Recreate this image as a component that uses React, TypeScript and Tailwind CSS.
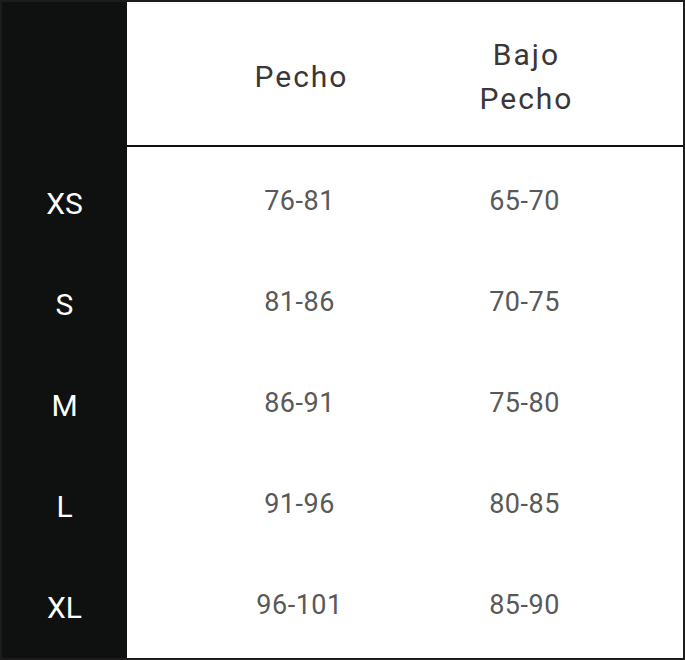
import React from "react";

const rows = [
  { size: "XS", chest: "76-81", under: "65-70" },
  { size: "S", chest: "81-86", under: "70-75" },
  { size: "M", chest: "86-91", under: "75-80" },
  { size: "L", chest: "91-96", under: "80-85" },
  { size: "XL", chest: "96-101", under: "85-90" },
];

const App = () => {
  return (
    <div className="h-[660px] w-[685px] bg-white font-['Roboto',sans-serif]">
      <div className="flex h-full w-full border-2 border-[#1c1c1c]">
        <div className="w-[125px] shrink-0 bg-[#0f1110]">
          <div className="h-[145px]" />
          <div className="flex flex-col pt-[6px]">
            {rows.map((r) => (
              <div
                key={r.size}
                className="flex h-[101px] items-center justify-center text-[30px] text-white"
              >
                {r.size}
              </div>
            ))}
          </div>
        </div>
        <div className="flex flex-1 flex-col">
          <div className="grid h-[145px] grid-cols-[225px_225px] border-b-2 border-[#111] pl-[62px] pt-[6px] text-[30px] leading-[44px] tracking-[2px] text-[#3b3739]">
            <div className="flex items-center justify-center">Pecho</div>
            <div className="flex items-center justify-center text-center">
              Bajo
              <br />
              Pecho
            </div>
          </div>
          <div className="flex flex-col pt-[4px] pl-[60px]">
            {rows.map((r) => (
              <div
                key={r.size}
                className="grid h-[101px] grid-cols-[225px_225px] items-center text-[27px] tracking-[0.5px] text-[#595959]"
              >
                <div className="text-center">{r.chest}</div>
                <div className="text-center">{r.under}</div>
              </div>
            ))}
          </div>
        </div>
      </div>
    </div>
  );
};

export default App;
